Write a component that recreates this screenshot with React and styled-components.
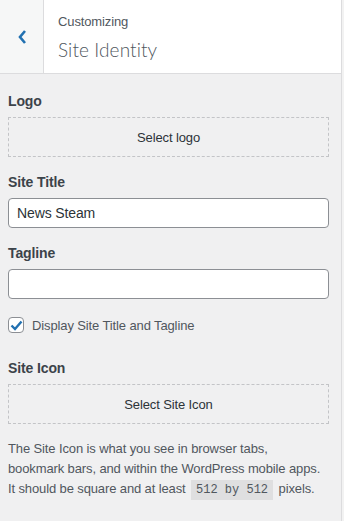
import styled, {createGlobalStyle} from "styled-components"

const Global = createGlobalStyle`
  body {
    margin: 0;
    background: #f0f0f1;
    font-family: "Liberation Sans", Arial, sans-serif;
  }
  * { box-sizing: border-box; }
`

const Page = styled.div`
  display: flex;
  width: 344px;
  height: 521px;
  background: #f2f2f2;
`

const Panel = styled.div`
  width: 342px;
  border-right: 1px solid #dcdcde;
  background: #f0f0f1;
  display: flex;
  flex-direction: column;
  letter-spacing: -0.12px;
`

const Header = styled.div`
  display: flex;
  height: 74px;
  background: #fff;
  border-bottom: 1px solid #dcdcde;
`

const BackButton = styled.button`
  width: 44px;
  border: 0;
  border-right: 1px solid #dcdcde;
  background: #f6f7f7;
  color: #2271b1;
  display: flex;
  align-items: center;
  justify-content: center;
  padding: 0;
  cursor: pointer;
`

const Titles = styled.div`
  padding: 13px 0 0 14px;
  color: #50575e;
`

const Small = styled.div`
  font-size: 13px;
  line-height: 18px;
`

const Big = styled.div`
  font-family: Lato, "Liberation Sans", sans-serif;
  font-size: 19px;
  font-weight: 300;
  line-height: 28px;
  margin-top: 5px;
  letter-spacing: 0.1px;
  color: #50575e;
`

const Body = styled.div`
  padding: 17px 12px 0 8px;
  display: flex;
  flex-direction: column;
`

const Label = styled.div`
  font-size: 14px;
  font-weight: 600;
  color: #3c434a;
  line-height: 20px;
  margin: ${(p) => p.$mt || 0}px 0 ${(p) => p.$mb || 6}px;
`

const Placeholder = styled.button`
  height: 40px;
  border: 1px dashed #c3c4c7;
  background: transparent;
  font-family: inherit;
  font-size: 13px;
  letter-spacing: inherit;
  color: #2c3338;
  cursor: pointer;
`

const Input = styled.input`
  height: 30px;
  border: 1px solid #8c8f94;
  border-radius: 4px;
  background: #fff;
  padding: 0 8px;
  font-family: inherit;
  font-size: 14px;
  letter-spacing: inherit;
  color: #2c3338;
`

const Check = styled.label`
  display: flex;
  align-items: center;
  gap: 8px;
  margin-top: 18px;
  font-size: 13px;
  color: #50575e;
`

const Box = styled.span`
  width: 16px;
  height: 16px;
  border: 1px solid #8c8f94;
  border-radius: 4px;
  background: #fff;
  display: flex;
  align-items: center;
  justify-content: center;
`

const Note = styled.p`
  margin: 15px 0 0;
  font-size: 13px;
  line-height: 20px;
  color: #50575e;
`

const Code = styled.code`
  font-family: "Liberation Mono", monospace;
  font-size: 12px;
  letter-spacing: 0;
  background: rgba(0, 0, 0, 0.07);
  padding: 3px 5px 3px;
  margin: 0 2px;
`

export default function App() {
  return (
    <Page>
      <Global />
      <Panel>
        <Header>
          <BackButton aria-label="Back">
            <svg width="10" height="16" viewBox="0 0 10 16">
              <path d="M8 2 L3 8 L8 14" fill="none" stroke="currentColor" strokeWidth="2.6" />
            </svg>
          </BackButton>
          <Titles>
            <Small>Customizing</Small>
            <Big>Site Identity</Big>
          </Titles>
        </Header>
        <Body>
          <Label>Logo</Label>
          <Placeholder>Select logo</Placeholder>
          <Label $mt={15} $mb={6}>Site Title</Label>
          <Input defaultValue="News Steam" />
          <Label $mt={15} $mb={6}>Tagline</Label>
          <Input />
          <Check>
            <Box>
              <svg width="13" height="11" viewBox="0 0 13 11">
                <path d="M1.5 5.5 L5 9 L11.5 1.5" fill="none" stroke="#2271b1" strokeWidth="2.4" />
              </svg>
            </Box>
            Display Site Title and Tagline
          </Check>
          <Label $mt={25}>Site Icon</Label>
          <Placeholder>Select Site Icon</Placeholder>
          <Note>
            The Site Icon is what you see in browser tabs,
            <br />
            bookmark bars, and within the WordPress mobile apps.
            <br />
            It should be square and at least <Code>512 by 512</Code> pixels.
          </Note>
        </Body>
      </Panel>
    </Page>
  )
}
